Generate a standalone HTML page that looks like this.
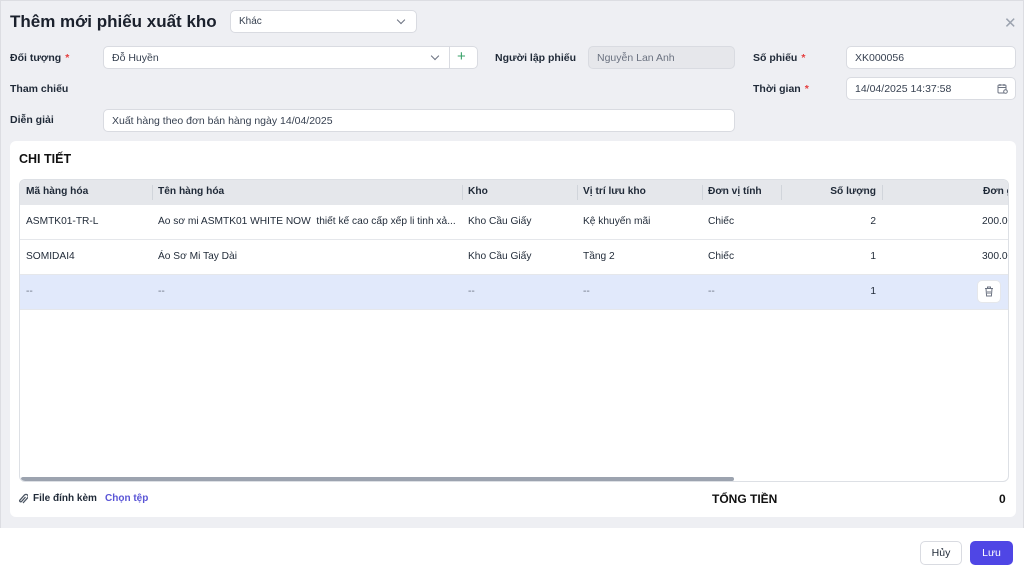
<!DOCTYPE html>
<html><head><meta charset="utf-8"><style>
*{box-sizing:border-box;margin:0;padding:0}
body{width:1024px;height:576px;overflow:hidden;font-family:"Liberation Sans",Arial,sans-serif;background:#fff;color:#1f2937;position:relative;font-size:11px}
.top{position:absolute;left:0;top:0;width:1024px;height:528px;background:#eeeff3;border:1px solid #dcdde2;border-bottom:none}
.a{position:absolute}
.lbl{position:absolute;font-weight:bold;font-size:10.5px;color:#1f2937}
.req{color:#e53e3e;margin-left:4px}
.inp{position:absolute;height:23px;background:#fff;border:1px solid #d9dbe1;border-radius:5px;padding:0 8px;line-height:22px;font-size:10.5px;color:#374151}
.chev{position:absolute;width:6px;height:6px;border-right:1.2px solid #6b7280;border-bottom:1.2px solid #6b7280;transform:rotate(45deg)}
.card{position:absolute;left:10px;top:141px;width:1006px;height:376px;background:#fff;border-radius:6px}
.tbl{position:absolute;left:19px;top:179px;width:990px;height:303px;border:1px solid #dde0e5;border-radius:6px;overflow:hidden;background:#fff}
.hd{position:absolute;left:0;top:0;width:100%;height:25px;background:#e5e7eb}
.c{position:absolute;font-size:10.2px;white-space:nowrap}
.h{font-weight:bold}
.row{position:absolute;left:0;width:100%;height:35px;border-bottom:1px solid #e5e7eb}
.sep{position:absolute;top:5px;width:1px;height:15px;background:#d1d5db}
</style></head><body>
<div class="top"></div>
<div class="a" style="left:10px;top:12px;font-size:17px;font-weight:bold;color:#1a202c">Thêm mới phiếu xuất kho</div>
<div class="inp" style="left:230px;top:10px;width:187px;font-size:10px">Khác</div>
<div class="chev" style="left:398px;top:17px"></div>
<div class="a" style="left:1004px;top:14px;font-size:15px;color:#9ca3af">✕</div>

<div class="lbl" style="left:10px;top:52px">Đối tượng<span class="req">*</span></div>
<div class="inp" style="left:103px;top:46px;width:375px">Đỗ Huyền</div>
<div class="chev" style="left:432px;top:53px"></div>
<div class="a" style="left:449px;top:47px;width:1px;height:21px;background:#d9dbe1"></div>
<div class="a" style="left:457px;top:48px;font-size:15px;color:#38a169">+</div>
<div class="lbl" style="left:495px;top:52px">Người lập phiếu</div>
<div class="inp" style="left:588px;top:46px;width:147px;background:#e6e7eb;color:#6b7280">Nguyễn Lan Anh</div>
<div class="lbl" style="left:753px;top:52px">Số phiếu<span class="req">*</span></div>
<div class="inp" style="left:846px;top:46px;width:170px">XK000056</div>

<div class="lbl" style="left:10px;top:83px">Tham chiếu</div>
<div class="lbl" style="left:753px;top:83px">Thời gian<span class="req">*</span></div>
<div class="inp" style="left:846px;top:77px;width:170px">14/04/2025 14:37:58</div>
<svg class="a" style="left:997px;top:83px" width="11" height="11" viewBox="0 0 11 11" fill="none" stroke="#6b7280" stroke-width="1"><rect x="1" y="2" width="8" height="8" rx="1"/><path d="M1 4.5h8M3 1v2M7 1v2"/><circle cx="8.5" cy="8.5" r="1.8" fill="#fff"/></svg>

<div class="lbl" style="left:10px;top:114px">Diễn giải</div>
<div class="inp" style="left:103px;top:109px;width:632px">Xuất hàng theo đơn bán hàng ngày 14/04/2025</div>

<div class="card"></div>
<div class="a" style="left:19px;top:152px;font-size:12.5px;font-weight:bold;color:#111">CHI TIẾT</div>
<div class="tbl">
 <div class="hd">
  <div class="c h" style="left:6px;top:6px">Mã hàng hóa</div>
  <div class="sep" style="left:132px"></div>
  <div class="c h" style="left:138px;top:6px">Tên hàng hóa</div>
  <div class="sep" style="left:442px"></div>
  <div class="c h" style="left:448px;top:6px">Kho</div>
  <div class="sep" style="left:557px"></div>
  <div class="c h" style="left:563px;top:6px">Vị trí lưu kho</div>
  <div class="sep" style="left:682px"></div>
  <div class="c h" style="left:688px;top:6px">Đơn vị tính</div>
  <div class="sep" style="left:761px"></div>
  <div class="c h" style="left:790px;top:6px;width:66px;text-align:right">Số lượng</div>
  <div class="sep" style="left:862px"></div>
  <div class="c h" style="left:963px;top:6px">Đơn giá</div>
 </div>
 <div class="row" style="top:25px">
  <div class="c" style="left:6px;top:11px">ASMTK01-TR-L</div>
  <div class="c" style="left:138px;top:11px;width:300px;overflow:hidden">Áo sơ mi ASMTK01 WHITE NOW&nbsp; thiết kế cao cấp xếp li tinh xả...</div>
  <div class="c" style="left:448px;top:11px">Kho Cầu Giấy</div>
  <div class="c" style="left:563px;top:11px">Kệ khuyến mãi</div>
  <div class="c" style="left:688px;top:11px">Chiếc</div>
  <div class="c" style="left:790px;top:11px;width:66px;text-align:right">2</div>
  <div class="c" style="left:962px;top:11px">200.000</div>
 </div>
 <div class="row" style="top:60px">
  <div class="c" style="left:6px;top:11px">SOMIDAI4</div>
  <div class="c" style="left:138px;top:11px">Áo Sơ Mi Tay Dài</div>
  <div class="c" style="left:448px;top:11px">Kho Cầu Giấy</div>
  <div class="c" style="left:563px;top:11px">Tầng 2</div>
  <div class="c" style="left:688px;top:11px">Chiếc</div>
  <div class="c" style="left:790px;top:11px;width:66px;text-align:right">1</div>
  <div class="c" style="left:962px;top:11px">300.000</div>
 </div>
 <div class="row" style="top:95px;background:#e1e9fb">
  <div class="c" style="left:6px;top:11px;color:#6b7280">--</div>
  <div class="c" style="left:138px;top:11px;color:#6b7280">--</div>
  <div class="c" style="left:448px;top:11px;color:#6b7280">--</div>
  <div class="c" style="left:563px;top:11px;color:#6b7280">--</div>
  <div class="c" style="left:688px;top:11px;color:#6b7280">--</div>
  <div class="c" style="left:790px;top:11px;width:66px;text-align:right">1</div>
  <div class="a" style="left:957px;top:5px;width:24px;height:23px;background:#fff;border:1px solid #e5e7eb;border-radius:5px"></div>
  <svg class="a" style="left:964px;top:11px" width="10" height="11" viewBox="0 0 10 11" fill="none" stroke="#6b7280" stroke-width="1"><path d="M1 2.5h8M3.5 2.5V1h3v1.5M2 2.5l.6 7.5h4.8L8 2.5M4 5v3M6 5v3"/></svg>
 </div>
 <div class="a" style="left:1px;top:297px;width:713px;height:4px;background:#9ca3af;border-radius:2px"></div>
</div>

<svg class="a" style="left:18px;top:493px" width="10" height="12" viewBox="0 0 10 12" fill="none" stroke="#4b5563" stroke-width="1.3"><path d="M7.5 4L3.5 8.5a1 1 0 0 1-1.5-1.5L6.5 2a2 2 0 0 1 3 3L5 10"/></svg>
<div class="a" style="left:33px;top:493px;font-size:10px;font-weight:bold;color:#1f2937">File đính kèm</div>
<div class="a" style="left:105px;top:493px;font-size:10px;font-weight:bold;color:#5a55d6">Chọn tệp</div>
<div class="a" style="left:712px;top:492px;font-size:12px;font-weight:bold;color:#111">TỔNG TIỀN</div>
<div class="a" style="left:999px;top:492px;font-size:12px;font-weight:bold;color:#111">0</div>

<div class="a" style="left:920px;top:541px;width:42px;height:24px;border:1px solid #d9dbe1;border-radius:5px;background:#fff;text-align:center;line-height:22px;font-size:10.5px">Hủy</div>
<div class="a" style="left:970px;top:541px;width:43px;height:24px;border-radius:5px;background:#4f46e5;color:#fff;text-align:center;line-height:24px;font-size:10.5px">Lưu</div>
</body></html>
